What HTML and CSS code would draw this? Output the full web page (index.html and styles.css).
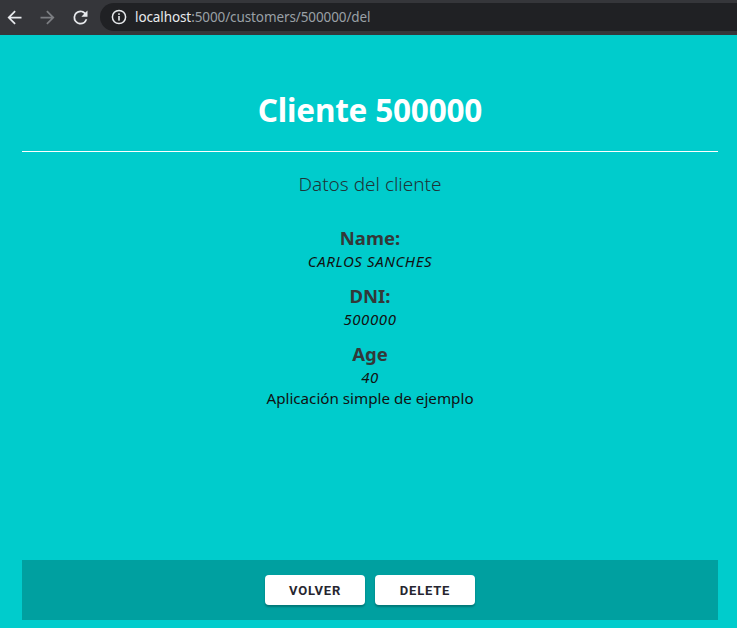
FILE: index.html
```html
<!DOCTYPE html>
<html lang="es">
<head>
<meta charset="utf-8">
<title>Cliente 500000</title>
<link rel="stylesheet" href="styles.css">
</head>
<body>
<div class="page">
  <div class="chrome">
    <div class="nav">
      <svg class="nav-icon" viewBox="0 0 24 24" width="20" height="20"><path d="M20 11H7.83l5.59-5.59L12 4l-8 8 8 8 1.41-1.41L7.83 13H20v-2z" fill="#e8eaed"/></svg>
      <svg class="nav-icon" viewBox="0 0 24 24" width="20" height="20"><path d="M4 11h12.17l-5.59-5.59L12 4l8 8-8 8-1.41-1.41L16.170 13H4v-2z" fill="#7c7e82"/></svg>
      <svg class="nav-icon" viewBox="0 0 24 24" width="20" height="20"><path d="M17.65 6.35A7.958 7.958 0 0 0 12 4a8 8 0 1 0 7.73 10h-2.08A5.99 5.99 0 0 1 12 18a6 6 0 1 1 0-12c1.66 0 3.14.69 4.22 1.78L13 11h7V4l-2.35 2.35z" fill="#e8eaed"/></svg>
    </div>
    <div class="omnibox">
      <svg class="info" viewBox="0 0 16 16" width="16" height="16"><circle cx="8" cy="8" r="6.6" fill="none" stroke="#e8eaed" stroke-width="1.5"/><rect x="7.2" y="7" width="1.6" height="4.6" fill="#e8eaed"/><rect x="7.2" y="4.3" width="1.6" height="1.6" fill="#e8eaed"/></svg>
      <span class="url"><span class="host">localhost</span>:5000/customers/500000/del</span>
    </div>
  </div>
  <main class="app">
    <div class="content">
      <h1 class="title">Cliente 500000</h1>
      <hr class="rule">
      <h2 class="subtitle">Datos del cliente</h2>
      <div class="fields">
        <div class="field">
          <div class="label">Name:</div>
          <div class="value">CARLOS SANCHES</div>
        </div>
        <div class="field">
          <div class="label">DNI:</div>
          <div class="value">500000</div>
        </div>
        <div class="field">
          <div class="label">Age</div>
          <div class="value">40</div>
        </div>
        <div class="note">Aplicación simple de ejemplo</div>
      </div>
    </div>
    <footer class="actions">
      <button class="btn">Volver</button>
      <button class="btn">Delete</button>
    </footer>
  </main>
</div>
</body>
</html>
```

FILE: styles.css
```css
html, body {
  margin: 0;
  padding: 0;
}
body {
  font-family: "Noto Sans", "Open Sans", sans-serif;
  background: #00cccc;
}
.page {
  height: 628px;
  display: flex;
  flex-direction: column;
  overflow: hidden;
}
.chrome {
  height: 35px;
  flex: none;
  background: #35363a;
  display: flex;
  align-items: flex-start;
  box-sizing: border-box;
  padding-top: 3px;
}
.nav {
  width: 100px;
  height: 28px;
  display: flex;
  align-items: center;
  gap: 12px;
  padding-left: 4px;
  box-sizing: border-box;
}
.nav-icon {
  display: block;
  width: 21px;
  height: 21px;
}
.omnibox {
  flex: 1;
  height: 28px;
  background: #202124;
  border-radius: 14px 0 0 14px;
  display: flex;
  align-items: center;
  padding-left: 11px;
  gap: 8px;
}
.info {
  display: block;
}
.url {
  font-family: "Noto Sans", sans-serif;
  font-size: 13.5px;
  color: #9aa0a6;
  letter-spacing: -0.1px;
}
.host {
  color: #e8eaed;
}
.app {
  flex: 1;
  display: flex;
  flex-direction: column;
  padding: 0 19px 8px 22px;
}
.content {
  flex: 1;
  text-align: center;
}
.title {
  margin: 55px 0 21px;
  font-size: 31.5px;
  line-height: 40px;
  font-weight: 700;
  color: #ffffff;
  letter-spacing: -0.2px;
}
.rule {
  margin: 0;
  border: 0;
  height: 1px;
  background: #ffffff;
}
.subtitle {
  margin: 18px 0 28px;
  font-size: 19px;
  line-height: 28px;
  font-weight: 300;
  color: #1e3438;
}
.fields {
  display: flex;
  flex-direction: column;
}
.field + .field {
  margin-top: 13px;
}
.label {
  font-size: 18.5px;
  line-height: 24px;
  font-weight: 700;
  color: #333838;
}
.value {
  margin-top: 1px;
  font-size: 15px;
  line-height: 20px;
  font-style: italic;
  letter-spacing: 0.6px;
  color: #111;
}
.note {
  margin-top: 1px;
  font-size: 15.2px;
  line-height: 20px;
  color: #111;
}
.actions {
  height: 60px;
  flex: none;
  background: #00a0a0;
  display: flex;
  align-items: center;
  justify-content: center;
  gap: 10px;
}
.btn {
  width: 100px;
  height: 30px;
  border: 0;
  border-radius: 4px;
  background: #ffffff;
  box-shadow: 0 2px 2px rgba(0, 0, 0, 0.25);
  font-family: Roboto, sans-serif;
  font-weight: 700;
  font-size: 13px;
  letter-spacing: 0.8px;
  text-transform: uppercase;
  color: #262630;
  padding: 0;
}
```
